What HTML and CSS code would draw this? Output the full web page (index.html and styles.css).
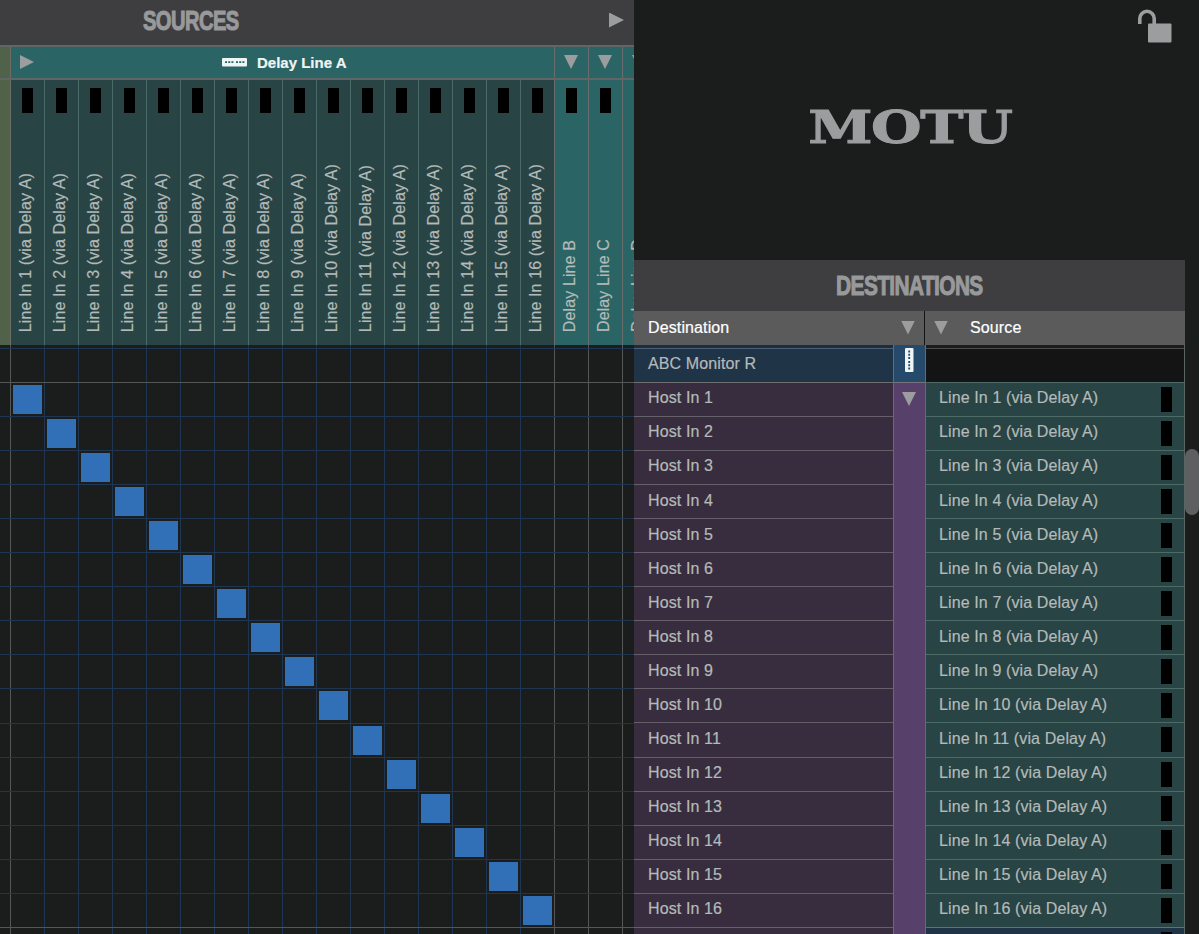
FILE: index.html
```html
<!DOCTYPE html>
<html>
<head>
<meta charset="utf-8">
<title>MOTU Routing</title>
<link rel="stylesheet" href="styles.css">
</head>
<body>
<div class="app">

<!-- sources and routing grid -->
<div class="left">
<div class="bar sources"><h1>SOURCES</h1><i class="tri right"></i></div>
<div class="groups">
<div class="edge"></div>
<div class="group open">
<i class="tri right"></i>
<svg class="device" width="25" height="9" viewBox="0 0 25 9"><rect width="25" height="8.5" rx="1"/><path d="M3 4.2H12M14 4.2H23"/></svg>
<b>Delay Line A</b>
</div>
<div class="group"><i class="tri down"></i></div>
<div class="group"><i class="tri down"></i></div>
<div class="group"><i class="tri down"></i></div>
</div>
<div class="columns">
<div class="edge"></div>
<div class="col"><i class="meter"></i><span>Line In 1 (via Delay A)</span></div>
<div class="col"><i class="meter"></i><span>Line In 2 (via Delay A)</span></div>
<div class="col"><i class="meter"></i><span>Line In 3 (via Delay A)</span></div>
<div class="col"><i class="meter"></i><span>Line In 4 (via Delay A)</span></div>
<div class="col"><i class="meter"></i><span>Line In 5 (via Delay A)</span></div>
<div class="col"><i class="meter"></i><span>Line In 6 (via Delay A)</span></div>
<div class="col"><i class="meter"></i><span>Line In 7 (via Delay A)</span></div>
<div class="col"><i class="meter"></i><span>Line In 8 (via Delay A)</span></div>
<div class="col"><i class="meter"></i><span>Line In 9 (via Delay A)</span></div>
<div class="col"><i class="meter"></i><span>Line In 10 (via Delay A)</span></div>
<div class="col"><i class="meter"></i><span>Line In 11 (via Delay A)</span></div>
<div class="col"><i class="meter"></i><span>Line In 12 (via Delay A)</span></div>
<div class="col"><i class="meter"></i><span>Line In 13 (via Delay A)</span></div>
<div class="col"><i class="meter"></i><span>Line In 14 (via Delay A)</span></div>
<div class="col"><i class="meter"></i><span>Line In 15 (via Delay A)</span></div>
<div class="col last"><i class="meter"></i><span>Line In 16 (via Delay A)</span></div>
<div class="col closed"><i class="meter"></i><span>Delay Line B</span></div>
<div class="col closed"><i class="meter"></i><span>Delay Line C</span></div>
<div class="col closed"><i class="meter"></i><span>Delay Line D</span></div>
</div>
<div class="matrix">
<div class="line top"></div>
<div class="line edgeline"><i style="--n:0"></i></div>
<div class="line"><i style="--n:1"></i></div>
<div class="line"><i style="--n:2"></i></div>
<div class="line"><i style="--n:3"></i></div>
<div class="line"><i style="--n:4"></i></div>
<div class="line"><i style="--n:5"></i></div>
<div class="line"><i style="--n:6"></i></div>
<div class="line"><i style="--n:7"></i></div>
<div class="line"><i style="--n:8"></i></div>
<div class="line"><i style="--n:9"></i></div>
<div class="line"><i style="--n:10"></i></div>
<div class="line"><i style="--n:11"></i></div>
<div class="line"><i style="--n:12"></i></div>
<div class="line"><i style="--n:13"></i></div>
<div class="line"><i style="--n:14"></i></div>
<div class="line"><i style="--n:15"></i></div>
<div class="line edgeline"></div>
</div>
</div>

<!-- destinations -->
<div class="dest">
<div class="brand">
<div class="logo">MOTU</div>
<svg class="lock" width="36" height="36" viewBox="0 0 36 36"><path d="M2.8 16V10.5a7.2 7.2 0 0 1 14.4 0V17"/><rect x="11" y="15.5" width="23.5" height="19" rx="1"/></svg>
</div>
<div class="bar"><h1 class="wide">DESTINATIONS</h1></div>
<div class="head">
<div class="name">Destination<i class="tri down"></i></div>
<div class="from"><i class="tri down"></i>Source</div>
</div>
<div class="table">
<div class="names">
<div class="row monitor"><span>ABC Monitor R</span></div>
<div class="row">Host In 1</div>
<div class="row">Host In 2</div>
<div class="row">Host In 3</div>
<div class="row">Host In 4</div>
<div class="row">Host In 5</div>
<div class="row">Host In 6</div>
<div class="row">Host In 7</div>
<div class="row">Host In 8</div>
<div class="row">Host In 9</div>
<div class="row">Host In 10</div>
<div class="row">Host In 11</div>
<div class="row">Host In 12</div>
<div class="row">Host In 13</div>
<div class="row">Host In 14</div>
<div class="row">Host In 15</div>
<div class="row">Host In 16</div>
<div class="row"></div>
</div>
<div class="side">
<div class="device-cell"><svg width="9" height="24" viewBox="0 0 9 24"><rect width="8.5" height="24" rx="1"/><path d="M4.2 2.5V11.5M4.2 13V22"/></svg></div>
<div class="fold"><i class="tri down"></i></div>
</div>
<div class="inputs">
<div class="row empty"></div>
<div class="row">Line In 1 (via Delay A)<i class="meter"></i></div>
<div class="row">Line In 2 (via Delay A)<i class="meter"></i></div>
<div class="row">Line In 3 (via Delay A)<i class="meter"></i></div>
<div class="row">Line In 4 (via Delay A)<i class="meter"></i></div>
<div class="row">Line In 5 (via Delay A)<i class="meter"></i></div>
<div class="row">Line In 6 (via Delay A)<i class="meter"></i></div>
<div class="row">Line In 7 (via Delay A)<i class="meter"></i></div>
<div class="row">Line In 8 (via Delay A)<i class="meter"></i></div>
<div class="row">Line In 9 (via Delay A)<i class="meter"></i></div>
<div class="row">Line In 10 (via Delay A)<i class="meter"></i></div>
<div class="row">Line In 11 (via Delay A)<i class="meter"></i></div>
<div class="row">Line In 12 (via Delay A)<i class="meter"></i></div>
<div class="row">Line In 13 (via Delay A)<i class="meter"></i></div>
<div class="row">Line In 14 (via Delay A)<i class="meter"></i></div>
<div class="row">Line In 15 (via Delay A)<i class="meter"></i></div>
<div class="row">Line In 16 (via Delay A)<i class="meter"></i></div>
<div class="row next"><i class="meter"></i></div>
</div>
</div>
</div>

<div class="scroll"><div class="thumb"></div></div>
</div>
</body>
</html>
```
FILE: styles.css
```css
* {box-sizing:border-box;}
body {margin:0; background:#1b1d1c; color:#b4bab9; font:16px/20px "Liberation Sans", Arial, sans-serif; letter-spacing:.12px; -webkit-text-stroke:.2px; overflow:hidden;}
.app {display:flex; width:1199px; height:934px; overflow:hidden;}
h1 {margin:0; font-size:28px; line-height:30px; letter-spacing:-.8px; color:#98999b; -webkit-text-stroke:1.1px #98999b; transform:scaleX(.72);}
h1.wide {transform:scaleX(.745); margin-top:1px;}
.tri {display:block; flex:none; background:#9b9d9f;}
.right.tri {width:15px; height:15px; clip-path:polygon(0 0,100% 50%,0 100%);}
.down.tri {width:14px; height:14px; clip-path:polygon(0 0,100% 0,50% 100%);}
.meter {display:block; flex:none; width:11px; height:25px; background:#000;}
.bar {background:#3e3d3f; display:flex; align-items:center; justify-content:center; height:51px;}

/* left part */
.left {width:634px; flex:none; overflow:hidden; display:flex; flex-direction:column;}
.sources {height:47px; padding:0 10px 3px 124px; justify-content:space-between; border-bottom:2px solid #606566; flex:none;}
.sources h1 {transform-origin:0 50%; margin-left:19px;}
.sources .tri {margin-top:-2px;}
.groups {display:flex; height:33px; flex:none; border-bottom:2px solid #606566;}
.edge {width:11px; flex:none; background:#51624a; border-right:1px solid #6e6c65;}
.group {width:34px; flex:none; background:#2a6464; border-right:1px solid #6a6d6d; display:flex; align-items:center; padding-left:9px;}
.group.open {width:544px; color:#eef5f4; font-size:15px; letter-spacing:0;}
.group.open .tri {width:14px; height:14px;}
.group .tri {margin-top:-1px;}
.device {margin:0 10px 0 188px;}
svg rect {fill:#eef5f4;}
svg path {fill:none; stroke:#2a6464; stroke-width:1.8; stroke-dasharray:2 1.2;}
.columns {display:flex; height:265px; flex:none;}
.col {width:34px; flex:none; background:#284444; border-right:1px solid #4a6a68; display:flex; flex-direction:column; justify-content:space-between; align-items:flex-start; padding:8px 0 13px 0;}
.col .meter {margin-left:11px;}
.col span {writing-mode:vertical-rl; transform:rotate(180deg); white-space:nowrap; margin-left:5px;}
.col.closed {background:#2a6464; border-color:#6a6d6d;}
.col.last {border-color:#6a6d6d;}
.matrix {flex:1; background:
linear-gradient(#555756,#555756) 10px 0/1px 100% no-repeat,
linear-gradient(#555756,#555756) 554px 0/1px 100% no-repeat,
linear-gradient(#555756,#555756) 588px 0/1px 100% no-repeat,
linear-gradient(#555756,#555756) 622px 0/1px 100% no-repeat,
repeating-linear-gradient(90deg,transparent 0 10px,#1f3554 10px 11px,transparent 11px 34px) #1b1d1c;}
.line {height:34.06px; border-top:1px solid #1f3554; padding-top:2px;}
.line.top {margin-top:3px;}
.line.edgeline {border-color:#555756;}
.line i {display:block; width:29px; height:29px; background:#3170b7; margin-left:calc(13px + var(--n) * 34px);}

/* right part */
.dest {width:551px; flex:none; overflow:hidden;}
.brand {height:260px; position:relative; display:flex; justify-content:center;}
.logo {font:bold 45px/50px "DejaVu Serif", serif; letter-spacing:-1px; -webkit-text-stroke:1px; color:#9b9d9f; margin-top:103px; transform:scaleX(1.29);}
.lock {position:absolute; right:12px; top:8px;}
.lock rect {fill:#9b9d9f;}
.lock path {stroke:#9b9d9f; stroke-width:3.6; stroke-dasharray:none;}
.head {display:flex; height:34px; background:#5b5b5c; color:#fff;}
.head .name {width:291px; padding:0 9px 1px 14px; display:flex; align-items:center; justify-content:space-between; border-right:1px solid #141414;}
.head .from {display:flex; align-items:center; gap:22px; padding:0 0 1px 9px;}
.table {display:flex;}
.names {width:259px;}
.row {height:34.06px; border-top:1px solid #655f69; background:#382d3e; padding:5.4px 0 0 14px; display:flex; justify-content:space-between;}
.names .row:nth-child(2) {border-color:#6e6d70;}
.row.monitor {height:37px; border:0; padding:3px 0 0; background:#1d2c3e;}
.monitor span {flex:1; background:#203448; border-top:1px solid #4c6075; padding:5px 0 0 14px;}
.side {width:33px; border:solid #6a6a6d; border-width:0 1px;}
.device-cell {height:37px; background:#264a6b; padding:3px 0 0 11px;}
.device-cell path {stroke:#264a6b;}
.fold {height:552px; border-top:1px solid #77717b; background:#574069; padding:9px 0 0 8px;}
.inputs {flex:1; border-right:1px solid #5a6664;}
.inputs .row {background:#284444; border-color:#4c6b67; padding:5.4px 12px 0 13px;}
.inputs .row .meter {margin:-1.4px 0 0 auto;}
.inputs .row.empty {height:34px; margin-top:3px; background:#141414; border-color:#4c4d4d;}
.inputs .row.next {background:#203448; border-color:#6a6d6d;}
.scroll {flex:1; border-right:1px solid #454747; padding-top:449px;}
.thumb {width:14px; height:66px; border-radius:7px; background:#5e5f61;}
```
